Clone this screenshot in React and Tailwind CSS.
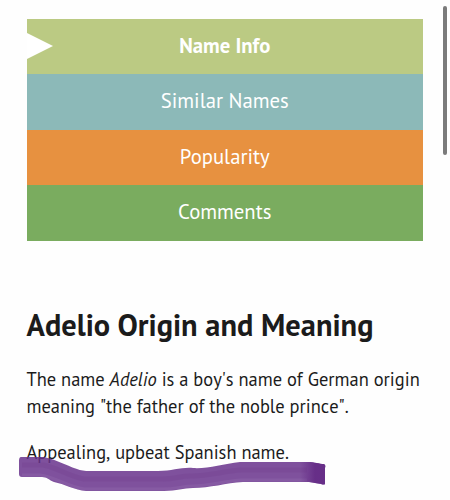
import React, { useState } from 'react';

const TABS = [
  { id: 'info', label: 'Name Info', color: 'bg-[#bbca83]' },
  { id: 'similar', label: 'Similar Names', color: 'bg-[#8cb9b8]' },
  { id: 'popularity', label: 'Popularity', color: 'bg-[#e79140]' },
  { id: 'comments', label: 'Comments', color: 'bg-[#7aac5f]' },
];

// Stacked section tabs, the active one has a notch on the left
const NameTabs = () => {
  const [active, setActive] = useState('info');

  return (
    <nav className="flex flex-col">
      {TABS.map((tab) => (
        <button
          key={tab.id}
          onClick={() => setActive(tab.id)}
          className={`relative flex h-[55.4px] w-full justify-center text-[20.7px] leading-[53px] text-white ${tab.color} ${
            active === tab.id ? 'font-bold' : 'font-normal'
          }`}
        >
          {active === tab.id && (
            <svg className="absolute top-3.5 left-0 h-[26px] w-[26px]" viewBox="0 0 26 26">
              <path d="M0 0L26 13L0 26Z" fill="#fff" />
            </svg>
          )}
          {tab.label}
        </button>
      ))}
    </nav>
  );
};

// Purple marker stroke under the last line
const Marker = () => (
  <svg
    className="pointer-events-none absolute top-[452px] left-0 h-12 w-[450px]"
    viewBox="0 452 450 48"
    fill="none"
  >
    <defs>
      <linearGradient id="ink" x1="300" y1="0" x2="325" y2="0" gradientUnits="userSpaceOnUse">
        <stop offset="0" stopColor="#5f2381" stopOpacity="0" />
        <stop offset="0.6" stopColor="#5f2381" stopOpacity="0.75" />
        <stop offset="1" stopColor="#5f2381" stopOpacity="0.75" />
      </linearGradient>
    </defs>
    <path
      d="M21 457L43 457C53 458 65 465 77 469Q82 471 90 471L158 471C173 471 181 467 193 468C207 469 223 464 240 462L308 462C315 462 319 464 324 464Q326 465 325 468L325 484Q324 485 321 484L309 482L243 482C226 483 210 488 193 488C183 488 177 491 164 491L86 491C75 490 64 484 54 482C49 480 47 477 42 477L22 477Q19 477 19 474L19 461Q19 457 21 457Z"
      fill="#66308a"
      fillOpacity="0.84"
    />
    <path
      d="M22 465L43 465C56 467 68 476 84 479L163 479C177 479 182 475 193 476C208 476 225 471 241 470L307 470"
      stroke="#60277f"
      strokeOpacity="0.14"
      strokeWidth="5"
    />
    <path
      d="M22 475L40 475C56 477 68 487 84 489L163 489C177 489 182 486 193 486C208 486 225 481 241 480L307 480"
      stroke="#a783bd"
      strokeOpacity="0.2"
      strokeWidth="3"
    />
    <path
      d="M300 462L308 462C315 462 319 464 324 464Q326 465 325 468L325 484Q324 485 321 484L309 482L300 482Z"
      fill="url(#ink)"
    />
  </svg>
);

const App = () => {
  return (
    <div className="relative h-[500px] w-[450px] overflow-hidden bg-[#fefefe] pt-[19px] pr-[27px] pl-[26.5px] font-['PT_Sans','Noto_Sans',sans-serif] text-[#1b1b1b]">
      <NameTabs />

      <h1 className="mt-[63px] text-[30.4px] leading-[42px] font-bold whitespace-nowrap">
        Adelio Origin and Meaning
      </h1>

      <div className="mt-[20px] text-[18.45px] leading-[27px] whitespace-nowrap [font-kerning:none]">
        <p>
          The name <em>Adelio</em> is a boy's name of German origin
          <br />
          meaning "the father of the noble prince".
        </p>
        <p className="mt-[19px]">Appealing, upbeat Spanish name.</p>
      </div>

      <Marker />

      {/* Scroll indicator */}
      <div className="absolute top-1.5 left-[443px] h-[149px] w-[4px] rounded-full bg-[#7b7b7b]" />
    </div>
  );
};

export default App;
